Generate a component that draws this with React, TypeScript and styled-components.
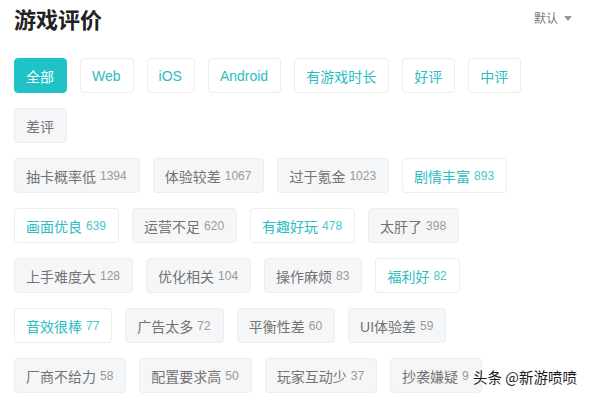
import React from "react";
import styled, { createGlobalStyle } from "styled-components";

const Global = createGlobalStyle`
  html, body { margin: 0; padding: 0; background: #fff; }
  body { font-family: "Liberation Sans", "Noto Sans CJK SC", sans-serif; }
`;

const Page = styled.div`
  position: relative;
  width: 594px;
  height: 396px;
  overflow: hidden;
  padding: 0 0 0 14px;
  box-sizing: border-box;
`;

const Header = styled.div`
  display: flex;
  justify-content: space-between;
  align-items: flex-start;
  padding-right: 22px;
  height: 58px;
`;

const Title = styled.h1`
  margin: 0;
  padding-top: 2px;
  font-family: "Noto Sans CJK SC", sans-serif;
  font-size: 22px;
  line-height: 32px;
  font-weight: 700;
  color: #222;
`;

const Sort = styled.div`
  display: flex;
  align-items: center;
  gap: 6px;
  margin-top: 9px;
  font-family: "Noto Sans CJK SC", sans-serif;
  font-size: 12px;
  line-height: 18px;
  color: #7a7a7a;
`;

const Caret = styled.span`
  width: 0;
  height: 0;
  border-left: 4px solid transparent;
  border-right: 4px solid transparent;
  border-top: 5px solid #999;
`;

const Groups = styled.div`
  display: flex;
  flex-direction: column;
  gap: 15px;
  width: 545px;
`;

const Wrap = styled.div`
  display: flex;
  flex-wrap: wrap;
  gap: 15px 13px;
`;

type Variant = "active" | "outline" | "gray";

const Chip = styled.div<{ $v: Variant }>`
  box-sizing: border-box;
  height: 35px;
  padding: 0 12px 0 11px;
  display: flex;
  align-items: center;
  border-radius: 4px;
  border: 1px solid ${(p) => (p.$v === "active" ? "#1fc3c7" : "#ededed")};
  background: ${(p) =>
    p.$v === "active" ? "#1fc3c7" : p.$v === "gray" ? "#f5f6f7" : "#fff"};
  color: ${(p) =>
    p.$v === "active" ? "#fff" : p.$v === "gray" ? "#737373" : "#2cbdc2"};
  font-size: 14px;
  white-space: nowrap;
`;

const Label = styled.span`
  font-family: "Liberation Sans", "Noto Sans CJK SC", sans-serif;
  font-size: 14px;
`;

const Count = styled.span<{ $teal: boolean }>`
  margin-left: 4px;
  font-size: 12px;
  color: ${(p) => (p.$teal ? "#4cc6ca" : "#999")};
`;

const Watermark = styled.div`
  position: absolute;
  left: 473px;
  top: 366px;
  font-family: "Noto Sans CJK SC", sans-serif;
  font-size: 14.5px;
  line-height: 22px;
  color: #1a1a1a;
  text-shadow: 0 0 2px #fff, 0 0 2px #fff;
  white-space: nowrap;
`;

const filters: { label: string; v: Variant }[] = [
  { label: "全部", v: "active" },
  { label: "Web", v: "outline" },
  { label: "iOS", v: "outline" },
  { label: "Android", v: "outline" },
  { label: "有游戏时长", v: "outline" },
  { label: "好评", v: "outline" },
  { label: "中评", v: "outline" },
  { label: "差评", v: "gray" },
];

const tags: { label: string; n: number; good?: boolean }[] = [
  { label: "抽卡概率低", n: 1394 },
  { label: "体验较差", n: 1067 },
  { label: "过于氪金", n: 1023 },
  { label: "剧情丰富", n: 893, good: true },
  { label: "画面优良", n: 639, good: true },
  { label: "运营不足", n: 620 },
  { label: "有趣好玩", n: 478, good: true },
  { label: "太肝了", n: 398 },
  { label: "上手难度大", n: 128 },
  { label: "优化相关", n: 104 },
  { label: "操作麻烦", n: 83 },
  { label: "福利好", n: 82, good: true },
  { label: "音效很棒", n: 77, good: true },
  { label: "广告太多", n: 72 },
  { label: "平衡性差", n: 60 },
  { label: "UI体验差", n: 59 },
  { label: "厂商不给力", n: 58 },
  { label: "配置要求高", n: 50 },
  { label: "玩家互动少", n: 37 },
  { label: "抄袭嫌疑", n: 9 },
];

export default function App() {
  return (
    <Page>
      <Global />
      <Header>
        <Title>游戏评价</Title>
        <Sort>
          默认 <Caret />
        </Sort>
      </Header>
      <Groups>
        <Wrap>
          {filters.map((f) => (
            <Chip key={f.label} $v={f.v}>
              <Label>{f.label}</Label>
            </Chip>
          ))}
        </Wrap>
        <Wrap>
          {tags.map((t) => (
            <Chip key={t.label} $v={t.good ? "outline" : "gray"}>
              <Label>{t.label}</Label>
              <Count $teal={!!t.good}>{t.n}</Count>
            </Chip>
          ))}
        </Wrap>
      </Groups>
      <Watermark>头条 @新游喷喷</Watermark>
    </Page>
  );
}
